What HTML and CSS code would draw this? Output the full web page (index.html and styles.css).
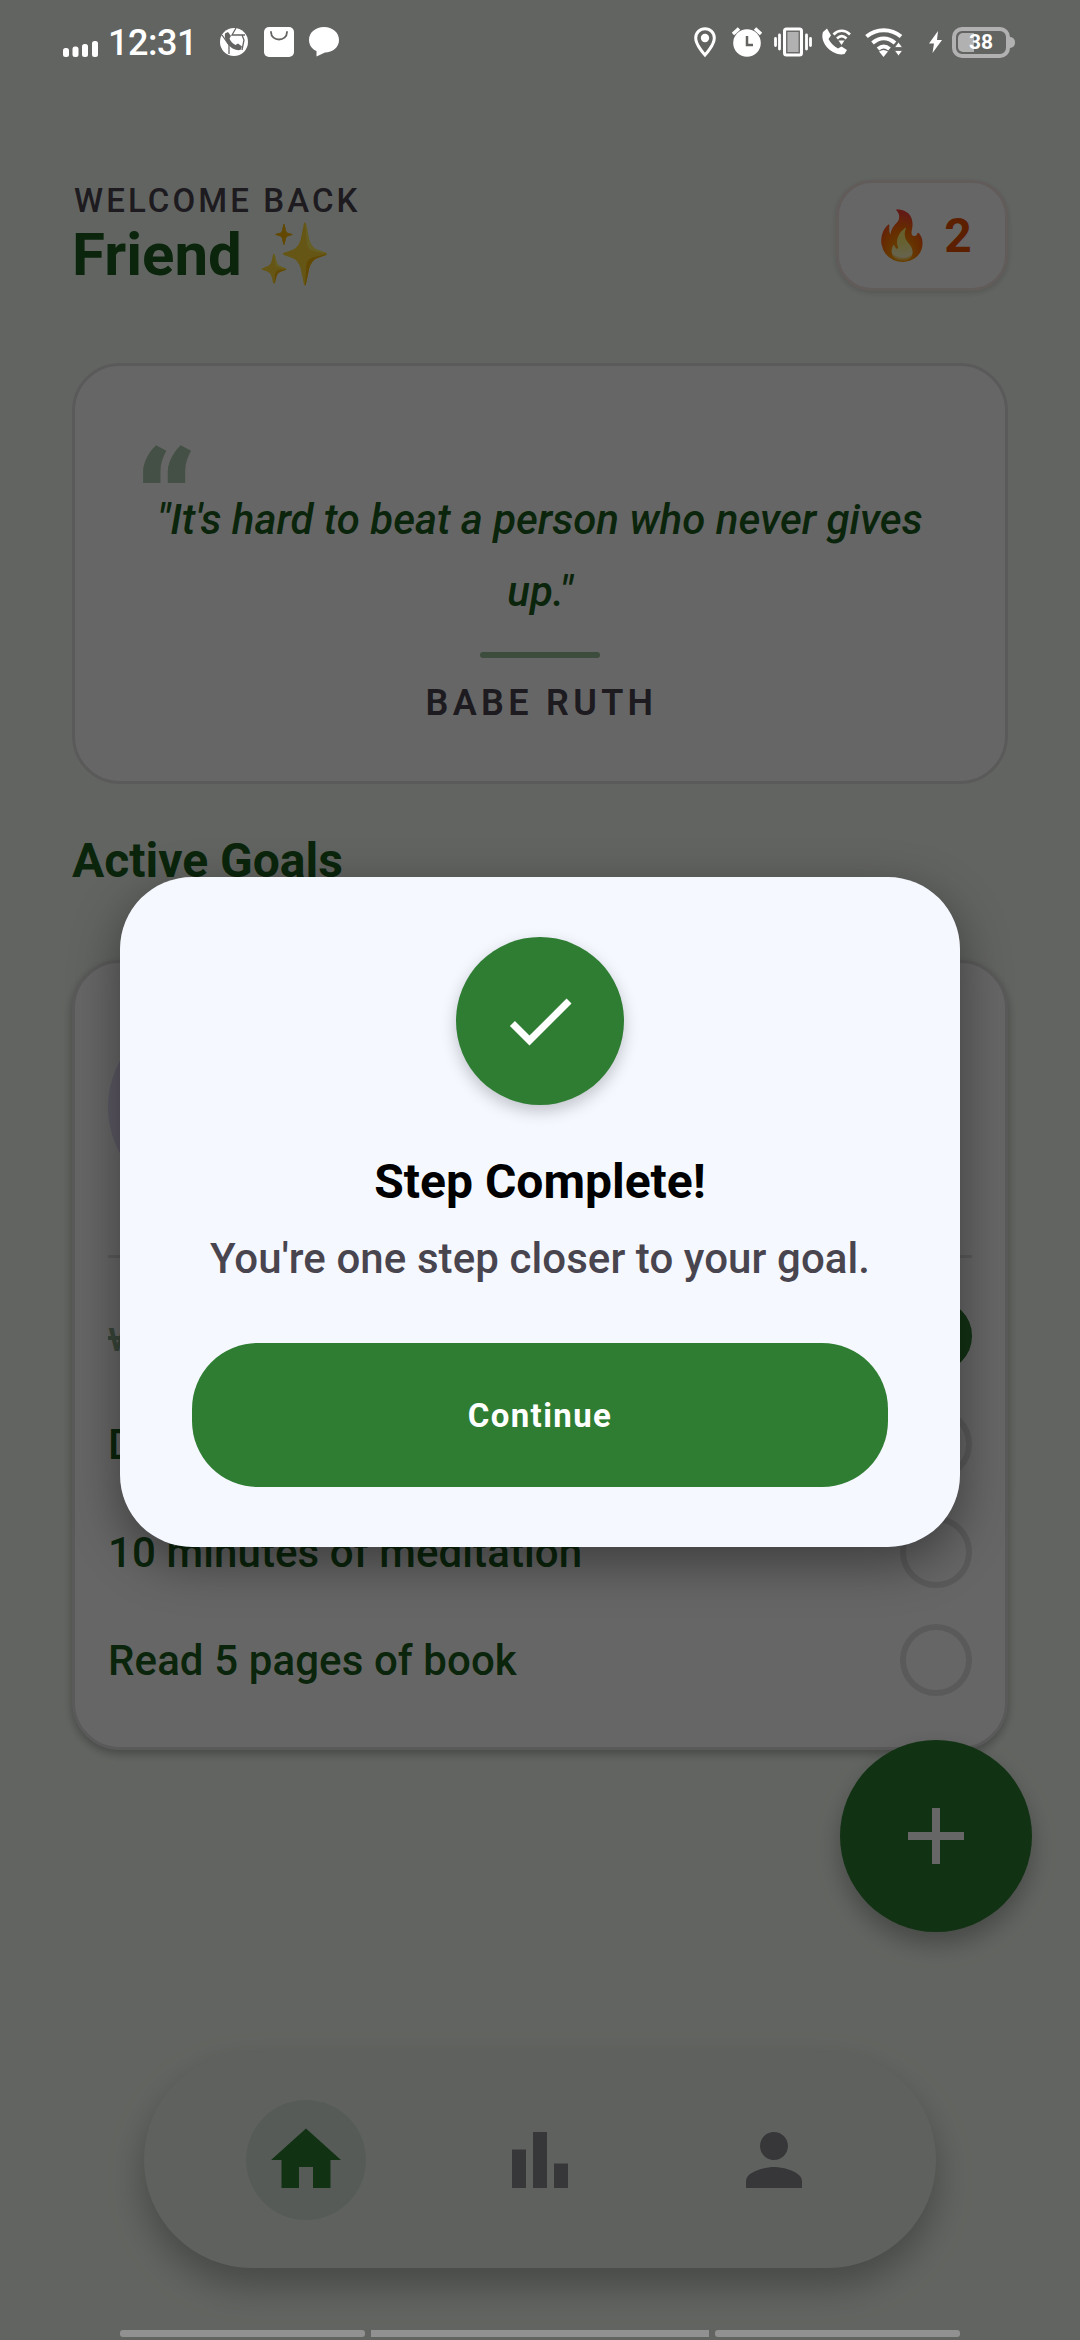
FILE: index.html
```html
<!DOCTYPE html>
<html lang="en">
<head>
<meta charset="utf-8">
<title>Goals</title>
<link rel="stylesheet" href="styles.css">
</head>
<body>
<div class="screen">
  <main class="app">
    <header class="header">
      <div class="greeting">
        <div class="welcome">WELCOME BACK</div>
        <h1 class="name">Friend <span class="sparkle">✨</span></h1>
      </div>
      <div class="streak"><span class="fire">🔥</span><span class="count">2</span></div>
    </header>

    <section class="quote-card">
      <div class="quote-mark">“</div>
      <p class="quote">"It's hard to beat a person who never gives up."</p>
      <div class="rule"></div>
      <div class="author">BABE RUTH</div>
    </section>

    <h2 class="section-title">Active Goals</h2>

    <section class="goal-card">
      <div class="goal-head"><div class="avatar"></div></div>
      <ul class="steps">
        <li class="step done"><span>w</span><i class="check"></i></li>
        <li class="step"><span>D</span><i class="check"></i></li>
        <li class="step"><span>10 minutes of meditation</span><i class="check"></i></li>
        <li class="step"><span>Read 5 pages of book</span><i class="check"></i></li>
      </ul>
    </section>
  </main>

  <button class="fab"><svg viewBox="0 0 24 24" width="96" height="96"><path d="M19 13h-6v6h-2v-6H5v-2h6V5h2v6h6z"/></svg></button>

  <nav class="nav">
    <a class="tab active"><svg viewBox="0 0 24 24" width="84" height="84"><path d="M10 20v-6h4v6h5v-8h3L12 3 2 12h3v8z"/></svg></a>
    <a class="tab"><svg viewBox="0 0 24 24" width="84" height="84"><path d="M4 9h4v11H4zM16 13h4v7h-4zM10 4h4v16h-4z"/></svg></a>
    <a class="tab"><svg viewBox="0 0 24 24" width="84" height="84"><path d="M12 12c2.21 0 4-1.79 4-4s-1.79-4-4-4-4 1.79-4 4 1.79 4 4 4zm0 2c-2.67 0-8 1.34-8 4v2h16v-2c0-2.66-5.33-4-8-4z"/></svg></a>
  </nav>

  <div class="scrim">
    <div class="dialog">
      <div class="badge"><svg viewBox="0 0 24 24" width="84" height="84"><path d="M9 16.17L4.83 12l-1.42 1.41L9 19 21 7l-1.41-1.41z"/></svg></div>
      <h3 class="dialog-title">Step Complete!</h3>
      <p class="dialog-text">You're one step closer to your goal.</p>
      <button class="continue">Continue</button>
    </div>
  </div>

  <div class="status">
    <svg class="signal" width="35" height="17" viewBox="0 0 35 17"><rect x="0" y="8" width="6" height="9" rx="2.5"/><rect x="9.5" y="6.5" width="6" height="10.5" rx="2.5"/><rect x="19" y="4" width="6" height="13" rx="2.5"/><rect x="29" y="1" width="6" height="16" rx="2.5"/></svg>
    <span class="clock">12:31</span>
    <svg class="s-chrome" width="30" height="30" viewBox="0 0 30 30"><circle cx="15" cy="15" r="14"/><g fill="none" stroke="#636461" stroke-width="1.3"><path d="M17 1l-4 7h13M23 8l2 5-2 10M10 27V18L3 8"/></g><path fill="#636461" d="M6 6.5l3-1.500 3 4-1.500 2.500c1 3 3 5 6 6.500l2.500-1.500 4 3-1.500 3.500c-8 1.500-17-8-15.500-16.500z"/></svg>
    <svg class="s-bag" width="30" height="30" viewBox="0 0 30 30"><rect width="30" height="30" rx="5"/><path d="M7 5c0 10 16 10 16 0" fill="none" stroke="#636461" stroke-width="1.8" stroke-linecap="round"/></svg>
    <svg class="s-chat" width="30" height="30" viewBox="0 0 30 30"><path d="M15 0c8.500 0 15 5.500 15 13s-6.500 12.500-14 12.500L7.500 29.500V24C3 22 0 18 0 13 0 5.500 6.500 0 15 0z"/></svg>
    <span class="spacer"></span>
    <svg class="s-pin" width="22" height="31" viewBox="0 0 22 31"><path d="M11 1.700c5.200 0 9.300 4 9.300 9.200C20.300 18 11 28 11 28S1.700 18 1.700 10.900C1.700 5.700 5.800 1.700 11 1.700z" fill="none" stroke="#fff" stroke-width="3"/><circle cx="11" cy="11" r="4.200"/></svg>
    <svg class="s-alarm" width="30" height="30" viewBox="0 0 30 30"><circle cx="15" cy="16" r="13.800"/><path d="M1 7l6-5.500M29 7l-6-5.500" stroke="#fff" stroke-width="3.500"/><path d="M15 9v9h6" fill="none" stroke="#636461" stroke-width="2.500"/></svg>
    <svg class="s-vibrate" width="38" height="30" viewBox="0 0 38 30"><rect x="10.500" y="2" width="17" height="26" rx="2" fill="#b1b1b1" stroke="#fff" stroke-width="3"/><rect x="12.800" y="4.300" width="12.400" height="21.400" fill="none" stroke="#636461" stroke-width="1.200"/><path d="M5.500 8v14M1.500 11.500v7M32.500 8v14M36.500 11.500v7" stroke="#fff" stroke-width="2.800" stroke-linecap="round"/></svg>
    <svg class="s-call" width="30" height="28" viewBox="0 0 30 28"><path d="M1 4l4-3.500 4 7-2.500 3.500c2 4 5 7 9.500 9.500l3.500-2 5.500 3.500-2.500 4C12 29-3 16 1 4z"/><path d="M11.500 6.500c5-5 11.500-5 16.500 0M15 10.500c3-3 6.500-3 9.500 0" fill="none" stroke="#fff" stroke-width="2.600"/><path d="M16.500 12.500h6L19.500 17z"/></svg>
    <svg class="s-wifi" width="38" height="29" viewBox="0 0 38 29"><g fill="none" stroke="#fff" stroke-width="4"><path d="M1.500 8.500c10-8.500 24.500-8.500 34.500 0M7.500 15c7-6 15.500-6 22.500 0M13 21c4-3.500 7.500-3.500 11.500 0"/></g><path d="M14 23.500c3-2 6-2 9 0L18.500 29z"/><path d="M33.500 14l4 5.500h-8zM33.500 28l4-5.500h-8z" stroke="#636461" stroke-width=".8"/></svg>
    <svg class="s-bolt" width="13" height="22" viewBox="0 0 13 22"><path d="M9 0L0 12.500h5L3.500 22 13 9H8z"/></svg>
    <span class="battery"><span class="cell"></span><b class="level">38</b></span>
  </div>

  <div class="gesture"><i></i><i class="mid"></i><i></i></div>
</div>
</body>
</html>
```
FILE: styles.css
```css
* { box-sizing: border-box; margin: 0; padding: 0; }
body { font-family: Roboto, "Noto Sans", sans-serif; }
svg { display: block; flex: none; }
button { border: 0; font-family: inherit; }

.screen { position: relative; width: 1080px; height: 2340px; overflow: hidden; background: #f5fbf2; }
.app { padding: 180px 72px 0; }

.header { display: flex; justify-content: space-between; align-items: flex-start; height: 183px; }
.welcome { padding-left: 2px; font-size: 33px; line-height: 42px; font-weight: 500; letter-spacing: 3.1px; color: #49454f; white-space: nowrap; }
.name { font-size: 60px; line-height: 66px; font-weight: 700; color: #1b5e20; white-space: nowrap; }
.sparkle { font-weight: 400; }
.streak { display: flex; align-items: center; justify-content: center; gap: 12px; width: 172px; height: 111px; background: #fff; border: 3px solid #f3e5e2; border-radius: 36px; box-shadow: 0 2px 6px rgba(0,0,0,.15); }
.fire { font-size: 48px; line-height: 60px; }
.count { font-size: 48px; line-height: 60px; font-weight: 700; color: #e65100; }

.quote-card { display: flex; flex-direction: column; align-items: center; height: 421px; padding: 73px 60px 0; background: #fff; border: 3px solid #e0e0e0; border-radius: 48px; }
.quote-mark { align-self: flex-start; height: 45px; font-size: 144px; line-height: 138px; font-weight: 900; color: #abc9ad; }
.quote { width: 800px; font-size: 42px; line-height: 72px; font-weight: 500; font-style: italic; text-align: center; color: #1b5e20; }
.rule { width: 120px; height: 6px; margin-top: 24px; border-radius: 3px; background: #97be99; }
.author { margin-top: 21px; padding-left: 3px; font-size: 36px; line-height: 48px; font-weight: 600; letter-spacing: 4.3px; color: #49454f; }

.section-title { margin-top: 49px; font-size: 48px; line-height: 56px; font-weight: 700; color: #1b5e20; }

.goal-card { margin-top: 71px; height: 790px; padding: 0 33px; background: #fff; border: 3px solid #e0e0e0; border-radius: 48px; box-shadow: 0 4px 10px rgba(0,0,0,.28); }
.goal-head { height: 295px; padding-top: 48px; border-bottom: 3px solid #e0e0e0; }
.avatar { width: 192px; height: 192px; border-radius: 50%; background: #e4dcf7; }
.steps { list-style: none; padding-top: 24px; }
.step { display: flex; align-items: center; justify-content: space-between; height: 108px; font-size: 42px; font-weight: 500; letter-spacing: .1px; color: #1b5e20; }
.check { width: 72px; height: 72px; border: 6px solid #e0e0e0; border-radius: 50%; }
.done span { text-decoration: line-through; opacity: .5; }
.done .check { background: #2e7d32; border-color: #2e7d32; }

.fab { position: absolute; left: 840px; top: 1740px; width: 192px; height: 192px; display: flex; align-items: center; justify-content: center; border-radius: 50%; background: #2e7d32; fill: #fff; box-shadow: 0 12px 24px rgba(0,0,0,.28); }

.nav { position: absolute; left: 144px; top: 2052px; width: 792px; height: 216px; display: flex; align-items: center; justify-content: center; gap: 114px; border-radius: 108px; background: #edf3ea; box-shadow: 0 18px 36px rgba(0,0,0,.28); fill: #8b8b8f; }
.tab { display: flex; align-items: center; justify-content: center; width: 120px; height: 120px; border-radius: 50%; }
.tab.active { background: #d7e4dc; fill: #2e7d32; }

.scrim { position: absolute; inset: 0; display: flex; align-items: flex-start; justify-content: center; padding-top: 877px; background: rgba(0,0,0,.6); }
.dialog { display: flex; flex-direction: column; align-items: center; width: 840px; height: 670px; padding: 60px 72px; border-radius: 72px; background: #f5f8ff; box-shadow: 0 16px 50px rgba(0,0,0,.4); }
.badge { display: flex; align-items: center; justify-content: center; width: 168px; height: 168px; border-radius: 50%; background: #2e7d32; fill: #fff; box-shadow: 0 6px 16px rgba(0,0,0,.22); }
.dialog-title { margin-top: 49px; font-size: 48px; line-height: 56px; font-weight: 700; color: #000; }
.dialog-text { margin-top: 19px; font-size: 42px; line-height: 60px; font-weight: 500; letter-spacing: .08px; color: #49454f; white-space: nowrap; }
.continue { width: 696px; height: 144px; margin-top: 54px; border-radius: 66px; background: #2e7d32; color: #fff; font-size: 33px; font-weight: 700; letter-spacing: 1.4px; }

.status { position: absolute; left: 0; top: 0; width: 1080px; height: 84px; display: flex; align-items: center; padding: 0 70px 0 63px; color: #fff; fill: #fff; }
.signal { margin-top: 13px; }
.clock { width: 88px; margin: 2px 0 0 10px; font-size: 36px; line-height: 40px; font-weight: 500; letter-spacing: -.5px; white-space: nowrap; }
.s-chrome { margin-left: 23px; }
.s-bag { margin-left: 15px; }
.s-chat { margin-left: 15px; }
.spacer { flex: 1; }
.s-alarm { margin-left: 16px; }
.s-vibrate { margin-left: 12px; }
.s-call { margin-left: 10px; }
.s-wifi { margin-left: 13px; }
.s-bolt { margin-left: 26px; }
.battery { position: relative; display: flex; align-items: center; justify-content: center; width: 58px; height: 31px; margin-left: 10px; border: 4px solid #b1b1b1; border-radius: 10px; }
.battery::after { content: ""; position: absolute; right: -9px; top: 6px; width: 5px; height: 11px; border-radius: 0 5px 5px 0; background: #b1b1b1; }
.cell { position: absolute; left: 2px; top: 2px; width: 16px; height: 19px; border-radius: 5px 0 0 5px; background: #b1b1b1; }
.level { position: relative; font-size: 21px; line-height: 22px; }

.gesture { position: absolute; left: 120px; top: 2330px; width: 840px; height: 7px; display: flex; gap: 6px; }
.gesture i { flex: 245; background: #919191; border-radius: 3px; }
.gesture .mid { flex: 338; border-radius: 0; }
```
